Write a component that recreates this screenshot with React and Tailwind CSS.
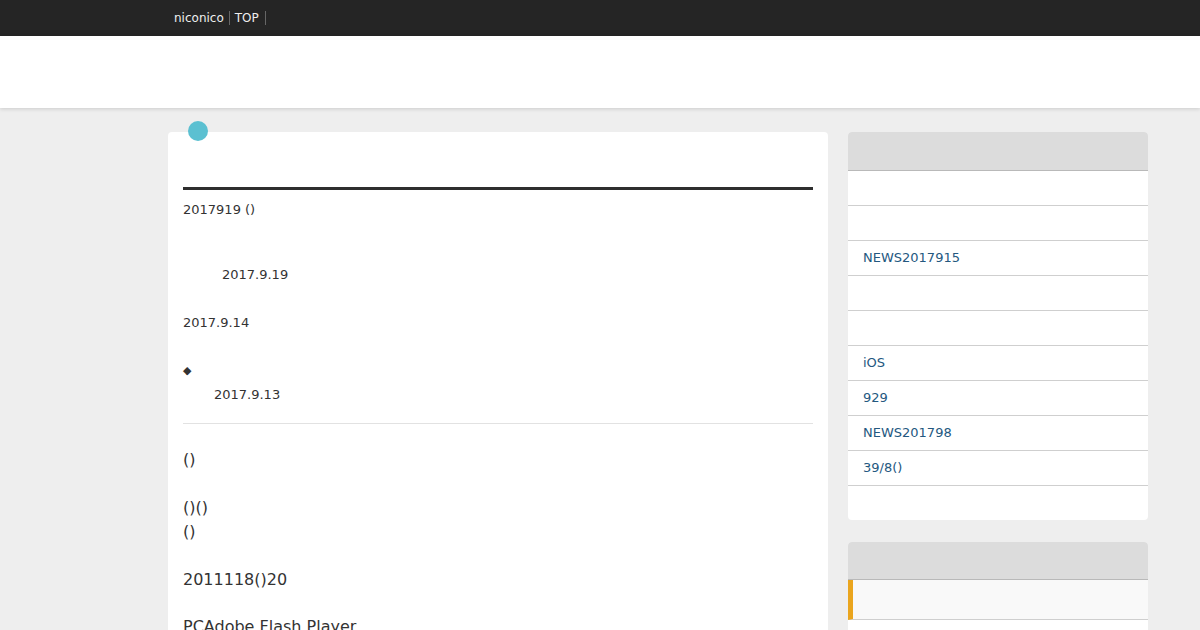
const sideLinks = ['', '', 'NEWS2017915', '', '', 'iOS', '929', 'NEWS201798', '39/8()'];

const SideRow = ({ label }) => (
  <div className="flex h-[35px] items-center border-b border-[#cfcfcf] px-[15px] text-[13px] text-[#24587f]">
    {label}
  </div>
);

export default function App() {
  return (
    <div className="min-h-screen bg-[#eeeeee] font-['DejaVu_Sans',sans-serif] text-[#333]">
      <div className="flex h-[36px] items-center bg-[#252525] pl-[169px] text-[12px] text-[#eee]">
        <span className="border-r border-[#666] pl-[5px] pr-[5px] leading-[14px]">niconico</span>
        <span className="border-r border-[#666] pl-[5px] pr-[6px] leading-[14px]">TOP</span>
      </div>
      <div className="h-[72px] bg-white shadow-[0_1px_4px_rgba(0,0,0,0.15)]" />

      <div className="flex items-start gap-[20px] pl-[168px] pt-[24px]">
        <main className="relative w-[660px] rounded-t-[4px] bg-white px-[15px] pb-[20px]">
          <span className="absolute left-[20px] top-[-11px] h-[20px] w-[20px] rounded-full bg-[#5bc0d1]" />
          <div className="h-[58px] border-b-[3px] border-[#2e2e2e]" />
          <div className="mt-[8px] text-[13px] leading-[24px]">
            <p>2017919 ()</p>
            <p className="mt-[41px] pl-[39px]">2017.9.19</p>
            <p className="mt-[24px]">2017.9.14</p>
            <p className="mt-[24px] text-[11px]">◆</p>
            <p className="pl-[31px]">2017.9.13</p>
          </div>
          <hr className="mt-[16px] border-t border-[#e2e2e2]" />
          <div className="mt-[24px] text-[16px] leading-[24px]">
            <p>()</p>
            <p className="mt-[24px]">()()</p>
            <p>()</p>
            <p className="mt-[24px]">2011118()20</p>
            <p className="mt-[23px]">PCAdobe Flash Player</p>
          </div>
        </main>

        <aside className="flex w-[300px] flex-col gap-[22px]">
          <div className="rounded-[4px] bg-white pb-[34px]">
            <div className="h-[39px] rounded-t-[4px] border-b border-[#b9b9b9] bg-[#dcdcdc]" />
            {sideLinks.map((l, i) => (
              <SideRow key={i} label={l} />
            ))}
          </div>
          <div className="rounded-[4px] bg-white pb-[60px]">
            <div className="h-[38px] rounded-t-[4px] border-b border-[#b9b9b9] bg-[#dcdcdc]" />
            <div className="h-[40px] border-b border-[#cfcfcf] border-l-[5px] border-l-[#eaa51e] bg-[#f9f9f9]" />
          </div>
        </aside>
      </div>
    </div>
  );
}
